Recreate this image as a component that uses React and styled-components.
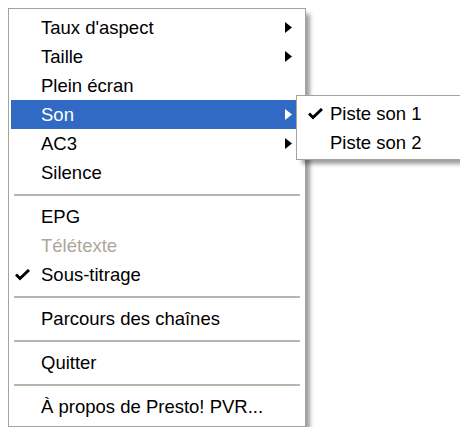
import React from 'react';
import styled, { createGlobalStyle } from 'styled-components';

const GlobalStyle = createGlobalStyle`
  body {
    margin: 8px;
    background: #ffffff;
    font-family: 'Liberation Sans', Arial, sans-serif;
  }
`;

const Stage = styled.div`
  position: relative;
  width: 298px;
`;

const MenuBox = styled.div`
  box-sizing: border-box;
  width: ${(p) => p.width}px;
  background: #ffffff;
  border: 1px solid #a5a297;
  padding: ${(p) => p.pad};
  box-shadow: 5px 5px 4px -1px rgba(0, 0, 0, 0.38);
  display: flex;
  flex-direction: column;
`;

// submenu floats over the main menu, next to "Son"
const SubMenu = styled(MenuBox)`
  position: absolute;
  left: 288px;
  top: 87px;
`;

const Item = styled.div`
  height: 29px;
  display: grid;
  grid-template-columns: ${(p) => p.gutter}px 1fr 18px;
  align-items: center;
  font-size: 18.5px;
  color: ${(p) => (p.active ? '#ffffff' : p.disabled ? '#aca899' : '#000000')};
  background: ${(p) => (p.active ? '#316ac5' : 'transparent')};
  white-space: nowrap;
`;

const Gutter = styled.span`
  display: flex;
  align-items: center;
  padding-left: ${(p) => p.checkAt}px;
`;

const Separator = styled.div`
  height: 15px;
  display: flex;
  align-items: center;
  padding: 0 3px;

  &::after {
    content: '';
    flex: 1;
    height: 2px;
    background: #b8b6ad;
  }
`;

const CheckMark = () => (
  <svg width="15" height="12" viewBox="0 0 15 12">
    <path d="M1 5.5 L5 9.5 L14 1" fill="none" stroke="#000" strokeWidth="3" />
  </svg>
);

const SubArrow = ({ color }) => (
  <svg width="7" height="11" viewBox="0 0 7 11" style={{ display: 'block' }}>
    <polygon points="0,0 7,5.5 0,11" fill={color} />
  </svg>
);

const mainItems = [
  { label: "Taux d'aspect", sub: true },
  { label: 'Taille', sub: true },
  { label: 'Plein écran' },
  { label: 'Son', sub: true, active: true },
  { label: 'AC3', sub: true },
  { label: 'Silence' },
  { sep: true },
  { label: 'EPG' },
  { label: 'Télétexte', disabled: true },
  { label: 'Sous-titrage', checked: true },
  { sep: true },
  { label: 'Parcours des chaînes' },
  { sep: true },
  { label: 'Quitter' },
  { sep: true },
  { label: 'À propos de Presto! PVR...' },
];

const subItems = [
  { label: 'Piste son 1', checked: true },
  { label: 'Piste son 2' },
];

export default function App() {
  return (
    <>
      <GlobalStyle />
      <Stage>
        <MenuBox width={298} pad="4px 2px 5px">
          {mainItems.map((it, i) =>
            it.sep ? (
              <Separator key={i} />
            ) : (
              <Item key={i} gutter={30} active={it.active} disabled={it.disabled}>
                <Gutter checkAt={4}>{it.checked && <CheckMark />}</Gutter>
                <span>{it.label}</span>
                <span>{it.sub && <SubArrow color={it.active ? '#ffffff' : '#000000'} />}</span>
              </Item>
            )
          )}
        </MenuBox>
        <SubMenu width={166} pad="3px 2px 2px">
          {subItems.map((it, i) => (
            <Item key={i} gutter={31}>
              <Gutter checkAt={9}>{it.checked && <CheckMark />}</Gutter>
              <span>{it.label}</span>
              <span />
            </Item>
          ))}
        </SubMenu>
      </Stage>
    </>
  );
}
